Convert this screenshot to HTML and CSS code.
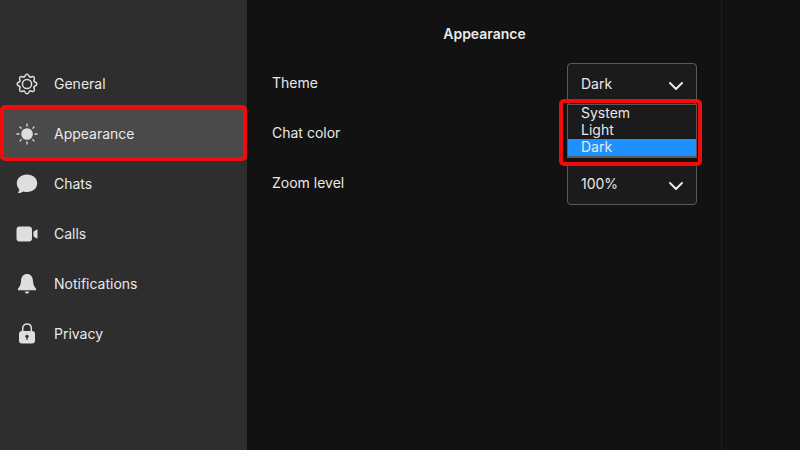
FILE: index.html
```html
<!DOCTYPE html>
<html lang="en">
<head>
  <meta charset="UTF-8">
  <title>Appearance</title>
  <meta name="viewport" content="width=device-width, initial-scale=1">
  <link rel="stylesheet" href="styles.css">
</head>
<body>
  <div class="preferences">
    <nav class="sidebar">
      <button class="nav-item" type="button">
        <svg class="icon" viewBox="-11 -11 22 22" fill="none" stroke="currentColor" stroke-width="1.5" stroke-linecap="round">
          <defs>
            <path id="tooth" d="M-2.9 -7.1C-2.2 -7.4 -2 -7.8 -1.700 -8.500Q-1.100 -9.800 0 -9.800T1.700 -8.500C2 -7.800 2.200 -7.400 2.900 -7.100"/>
          </defs>
          <use href="#tooth"/>
          <use href="#tooth" transform="rotate(45)"/>
          <use href="#tooth" transform="rotate(90)"/>
          <use href="#tooth" transform="rotate(135)"/>
          <use href="#tooth" transform="rotate(180)"/>
          <use href="#tooth" transform="rotate(225)"/>
          <use href="#tooth" transform="rotate(270)"/>
          <use href="#tooth" transform="rotate(315)"/>
          <circle r="4.6"/>
        </svg>
        General
      </button>
      <button class="nav-item selected" type="button">
        <svg class="icon" viewBox="-11 -11 22 22" fill="currentColor" stroke="currentColor" stroke-width="1.3">
          <circle r="5.2"/>
          <path d="M0 -7.6V-10.5M0 7.6V10.5M-7.6 0H-10.5M7.6 0H10.5M-5.4 -5.4L-7.4 -7.4M5.4 -5.4L7.4 -7.4M-5.4 5.4L-7.4 7.4M5.4 5.4L7.4 7.4"/>
        </svg>
        Appearance
      </button>
      <button class="nav-item" type="button">
        <svg class="icon" viewBox="0 0 22 22" fill="currentColor">
          <path d="M11 1.500C5.100 1.500 .8 5.200 .8 10.200C.8 12.700 1.900 14.900 3.300 16.300C3.200 17.700 2.600 18.900 1.900 19.900C4.300 20 6.200 19.200 7.400 18.400C8.500 18.800 9.700 18.900 11 18.900C17 18.900 21.200 15.200 21.200 10.200S17 1.500 11 1.500Z"/>
        </svg>
        Chats
      </button>
      <button class="nav-item" type="button">
        <svg class="icon" viewBox="0 0 22 22" fill="currentColor">
          <rect x=".5" y="3.500" width="15.500" height="15" rx="3.200"/>
          <path d="M17.400 8.800L20.300 6.700Q21.500 6 21.500 7.300V14.700Q21.500 16 20.300 15.300L17.400 13.200Z"/>
        </svg>
        Calls
      </button>
      <button class="nav-item" type="button">
        <svg class="icon" viewBox="0 0 22 22" fill="currentColor">
          <path d="M11 1C7.500 1 5.400 3.500 5.100 7.500C4.700 12 3.600 14 2 15.700Q1.200 17.300 2.600 17.300H19.400Q20.800 17.300 20 15.700C18.400 14 17.300 12 16.900 7.500C16.600 3.500 14.500 1 11 1Z"/>
          <path d="M8.600 18.600H13.400Q12.700 20.700 11 20.700T8.600 18.600Z"/>
        </svg>
        Notifications
      </button>
      <button class="nav-item" type="button">
        <svg class="icon" viewBox="0 0 22 22">
          <path d="M6.700 9V5.300C6.700 2.700 8.500 1 11 1S15.300 2.700 15.300 5.300V9" fill="none" stroke="currentColor" stroke-width="1.500"/>
          <rect x="3" y="8" width="16" height="12.500" rx="3" fill="currentColor"/>
          <circle cx="11" cy="13.300" r="1.600" fill="#2e2e2e"/>
          <path d="M10.400 13.300H11.600V17H10.400Z" fill="#2e2e2e"/>
        </svg>
        Privacy
      </button>
    </nav>

    <main class="content">
      <h1 class="title">Appearance</h1>
      <div class="setting">
        <label class="name" for="theme">Theme</label>
        <div class="select">
          <select id="theme">
            <option>System</option>
            <option>Light</option>
            <option selected>Dark</option>
          </select>
          <svg class="chevron" viewBox="0 0 14 8"><path d="M1 1L7 7L13 1"/></svg>
          <ul class="menu">
            <li>System</li>
            <li>Light</li>
            <li class="active">Dark</li>
          </ul>
        </div>
      </div>
      <div class="setting">
        <span class="name">Chat color</span>
      </div>
      <div class="setting">
        <label class="name" for="zoom">Zoom level</label>
        <div class="select">
          <select id="zoom">
            <option selected>100%</option>
          </select>
          <svg class="chevron" viewBox="0 0 14 8"><path d="M1 1L7 7L13 1"/></svg>
        </div>
      </div>
    </main>
  </div>
</body>
</html>
```
FILE: styles.css
```css
* {
  box-sizing: border-box;
}
body {
  margin: 0;
  background: #121212;
  color: #e9e9e9;
  font-family: Inter, sans-serif;
  font-size: 14px;
  line-height: 20px;
}
.preferences {
  display: flex;
  min-height: 100vh;
}
.sidebar {
  flex: 0 0 247px;
  padding-top: 59px;
  background: #2e2e2e;
}
.nav-item {
  position: relative;
  display: flex;
  align-items: center;
  gap: 16px;
  width: 100%;
  height: 50px;
  padding: 0 16px;
  border: 0;
  background: none;
  color: inherit;
  font: inherit;
  text-align: left;
}
.nav-item.selected {
  background: #4a4a4a;
}
.icon {
  width: 22px;
  height: 22px;
  color: #dedede;
}

/* red highlight frames */
.nav-item.selected::after,
.menu::after {
  content: "";
  position: absolute;
  border: 4px solid #f30b0b;
  border-radius: 5px;
  pointer-events: none;
}
.nav-item.selected::after {
  inset: -4px 0 -2px 0;
}
.menu::after {
  inset: -6px -6px -10px -9px;
}

.content {
  flex: 0 1 475px;
  padding: 0 24px 0 25px;
  border-right: 1px solid #1f1f1f;
}
.title {
  margin: 0;
  padding: 24px 0 15px;
  font-size: 14px;
  font-weight: 600;
  line-height: 20px;
  text-align: center;
}
.setting {
  display: flex;
  align-items: center;
  justify-content: space-between;
  height: 50px;
}
.name {
  padding-bottom: 2px;
}
.select {
  position: relative;
  width: 130px;
}
.select select {
  display: block;
  appearance: none;
  width: 100%;
  height: 42px;
  padding: 0 13px;
  border: 1px solid #5a5a5a;
  border-radius: 4px;
  background: #1b1b1b;
  color: inherit;
  font: inherit;
}
.chevron {
  position: absolute;
  top: 19px;
  right: 14px;
  width: 14px;
  height: 8px;
  fill: none;
  stroke: #e9e9e9;
  stroke-width: 2;
  stroke-linecap: round;
  stroke-linejoin: round;
  pointer-events: none;
}
.menu {
  position: absolute;
  top: 41px;
  left: 0;
  right: 0;
  z-index: 1;
  margin: 0;
  padding: 0;
  border: 1px solid #5a5a5a;
  border-bottom-width: 2px;
  background: #1b1b1b;
  list-style: none;
}
.menu li {
  padding: 0 13px 2px;
  line-height: 15px;
}
.menu .active {
  background: #1e90ff;
}
```
